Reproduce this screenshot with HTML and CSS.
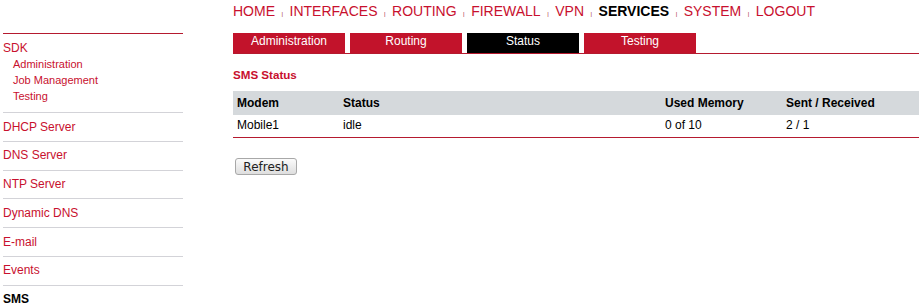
FILE: index.html
```html
<!DOCTYPE html>
<html>
<head>
<meta charset="utf-8">
<link rel="stylesheet" href="styles.css">
</head>
<body>
<div class="page">
  <aside class="sidebar">
    <div class="side-group">
      <a class="side-head" href="#">SDK</a>
      <a class="side-sub" href="#">Administration</a>
      <a class="side-sub" href="#">Job Management</a>
      <a class="side-sub" href="#">Testing</a>
    </div>
    <a class="side-item" href="#">DHCP Server</a>
    <a class="side-item" href="#">DNS Server</a>
    <a class="side-item" href="#">NTP Server</a>
    <a class="side-item" href="#">Dynamic DNS</a>
    <a class="side-item" href="#">E-mail</a>
    <a class="side-item" href="#">Events</a>
    <a class="side-item active" href="#">SMS</a>
  </aside>
  <main class="main">
    <nav class="topnav">
      <a href="#">HOME</a><span class="sep">|</span><a href="#">INTERFACES</a><span class="sep">|</span><a href="#">ROUTING</a><span class="sep">|</span><a href="#">FIREWALL</a><span class="sep">|</span><a href="#">VPN</a><span class="sep">|</span><a class="current" href="#">SERVICES</a><span class="sep">|</span><a href="#">SYSTEM</a><span class="sep">|</span><a href="#">LOGOUT</a>
    </nav>
    <div class="tabs">
      <a class="tab" href="#">Administration</a>
      <a class="tab" href="#">Routing</a>
      <a class="tab tab-active" href="#">Status</a>
      <a class="tab" href="#">Testing</a>
    </div>
    <h2 class="section-title">SMS Status</h2>
    <table class="status-table">
      <thead>
        <tr><th class="c1">Modem</th><th class="c2">Status</th><th class="c3">Used Memory</th><th class="c4">Sent / Received</th></tr>
      </thead>
      <tbody>
        <tr><td>Mobile1</td><td>idle</td><td>0 of 10</td><td>2 / 1</td></tr>
      </tbody>
    </table>
    <button class="btn" type="button">Refresh</button>
  </main>
</div>
</body>
</html>
```
FILE: styles.css
```css
html, body {
  margin: 0;
  padding: 0;
  background: #ffffff;
}
body {
  font-family: "Liberation Sans", Arial, sans-serif;
  font-size: 12px;
  color: #000;
}
a {
  text-decoration: none;
}
.page {
  display: flex;
  align-items: flex-start;
}
.sidebar {
  width: 180px;
  margin-left: 3px;
  padding-top: 33px;
  display: flex;
  flex-direction: column;
}
.side-group {
  border-top: 1px solid #b51a2f;
  padding-top: 6px;
  padding-bottom: 8px;
  display: flex;
  flex-direction: column;
}
.side-head {
  color: #c8102e;
  font-size: 12px;
  line-height: 16px;
}
.side-sub {
  color: #c8102e;
  font-size: 11px;
  line-height: 16px;
  padding-left: 10px;
}
.side-item {
  border-top: 1px solid #d3d3d8;
  color: #c8102e;
  font-size: 12px;
  line-height: 16px;
  padding-top: 5.5px;
  padding-bottom: 6.3px;
}
.side-item.active {
  color: #000;
  font-weight: bold;
}
.main {
  flex: 1;
  margin-left: 50px;
  margin-right: 4px;
  display: flex;
  flex-direction: column;
  align-items: flex-start;
}
.topnav {
  height: 32px;
  padding-top: 1px;
  font-size: 14px;
  line-height: 20px;
  white-space: nowrap;
}
.topnav a {
  color: #c8102e;
}
.topnav a.current {
  color: #000;
  font-weight: bold;
}
.sep {
  font-size: 6px;
  color: #a02030;
  margin: 0 6.5px;
  vertical-align: baseline;
}
.tabs {
  align-self: stretch;
  display: flex;
  gap: 5px;
  border-bottom: 1px solid #b51a2f;
}
.tab {
  width: 112px;
  height: 20px;
  box-sizing: border-box;
  background: #c2132b;
  color: #fff;
  text-align: center;
  font-size: 12px;
  line-height: 16px;
  padding-bottom: 4px;
}
.tab-active {
  background: #000;
}
.section-title {
  margin: 13px 0 8px 0;
  font-size: 11.6px;
  line-height: 16px;
  font-weight: bold;
  color: #c8102e;
}
.status-table {
  width: 100%;
  border-collapse: collapse;
  font-size: 12px;
}
.status-table th {
  background: #d5d9dc;
  text-align: left;
  font-weight: bold;
  line-height: 16px;
  padding: 4px 4px 4px 4px;
}
.status-table td {
  line-height: 16px;
  padding: 2px 4px 4px 4px;
  border-bottom: 1px solid #b51a2f;
}
.status-table .c1 { width: 98px; }
.status-table .c2 { width: 314px; }
.status-table .c3 { width: 113px; }
.btn {
  margin: 20px 0 0 2px;
  width: 62px;
  height: 17px;
  padding: 0;
  box-sizing: border-box;
  border: 1px solid #a8a8a8;
  border-radius: 3px;
  background: linear-gradient(#fbfbfb, #dedede);
  font-family: "DejaVu Sans", sans-serif;
  font-size: 12px;
  line-height: 14px;
  color: #222;
}
```
